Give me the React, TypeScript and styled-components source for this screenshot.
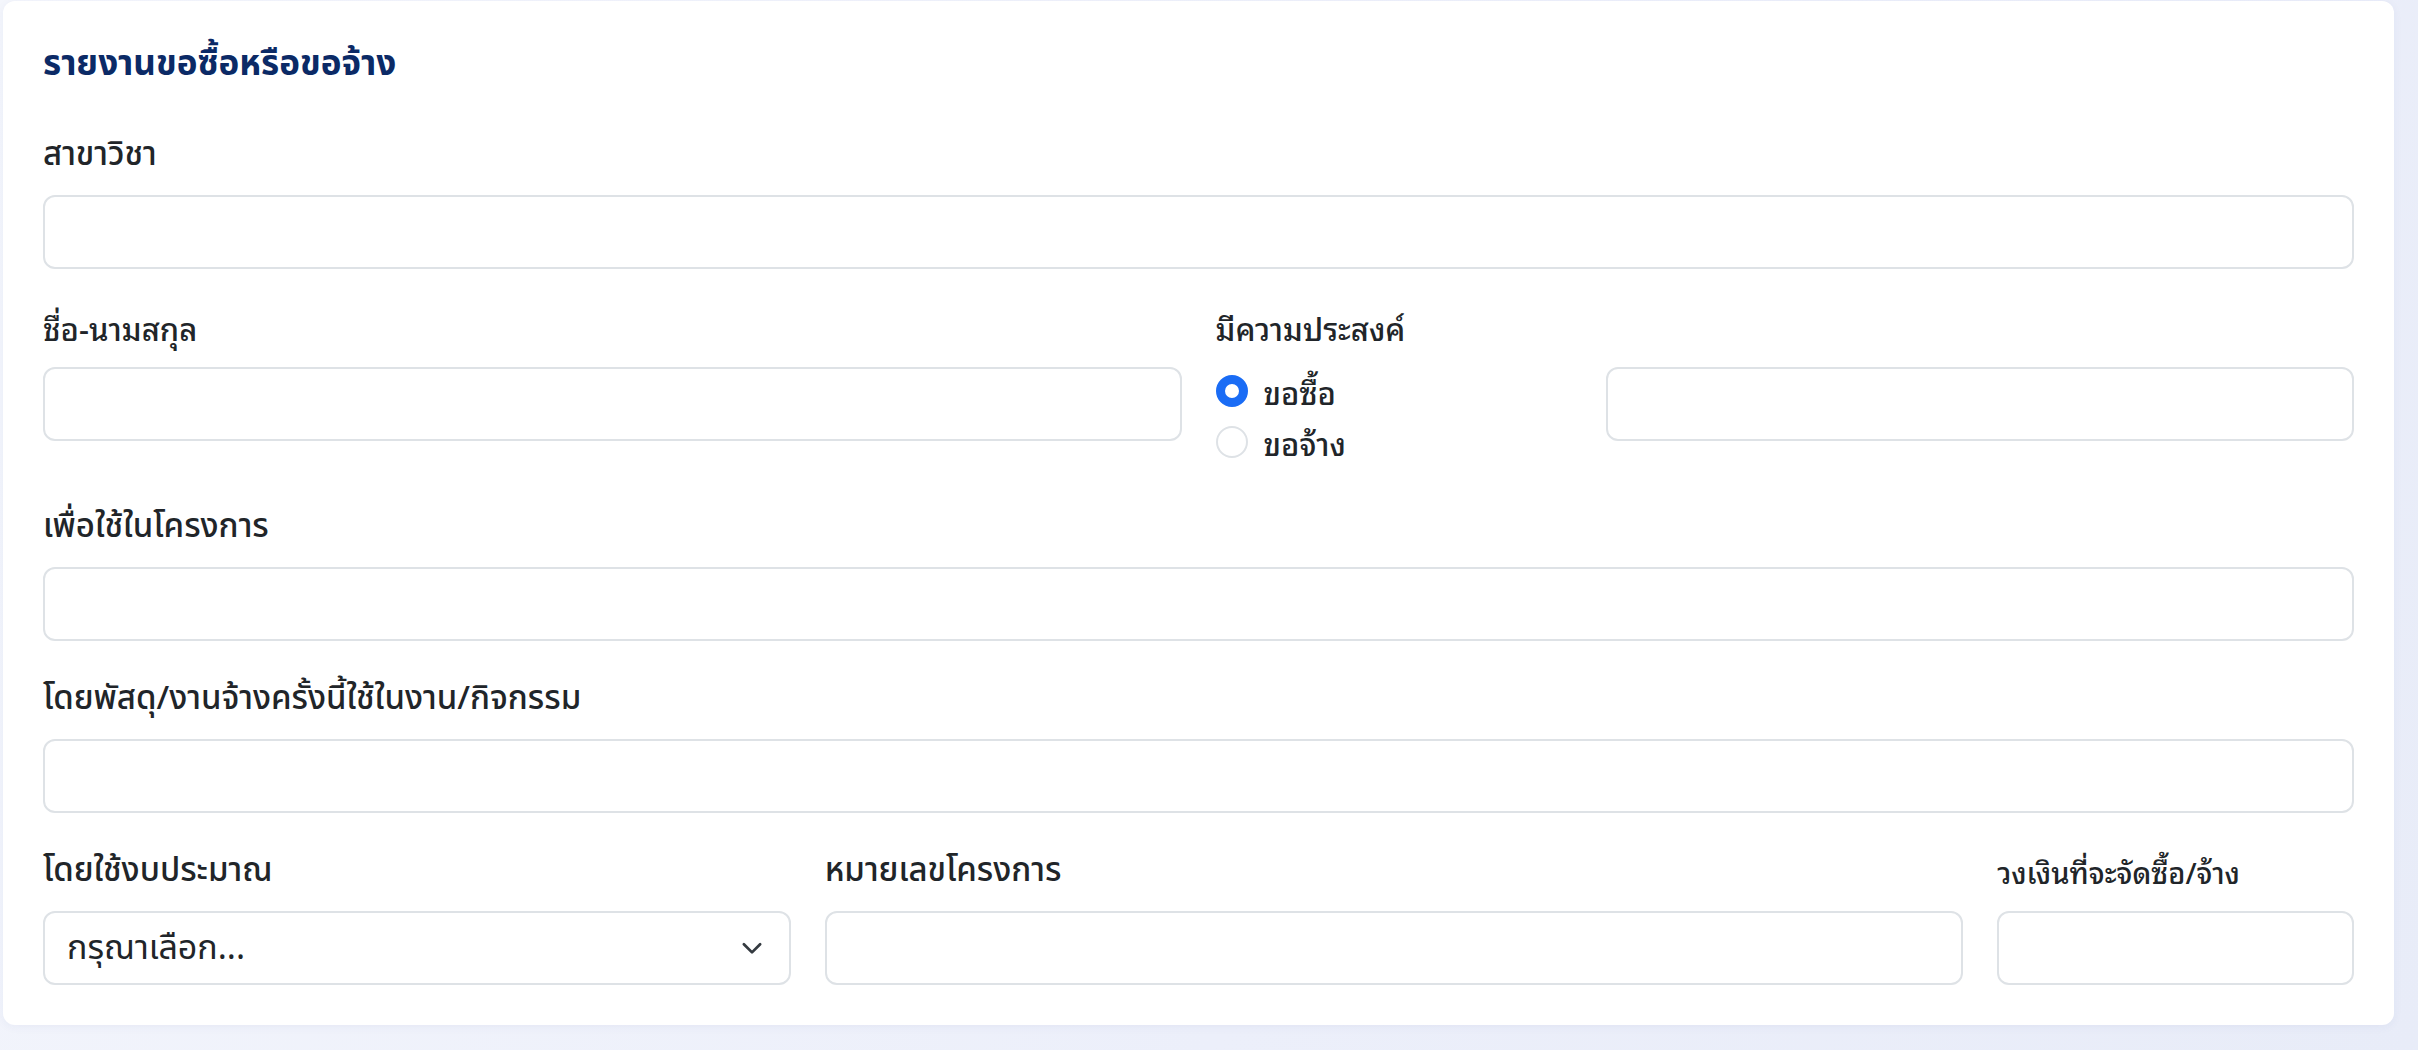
import React from "react";
import styled, { createGlobalStyle } from "styled-components";

const GlobalStyle = createGlobalStyle`
  *, *::before, *::after { box-sizing: border-box; }
  html, body { margin: 0; padding: 0; }
  body {
    background: linear-gradient(120deg, #f4f6fc 0%, #eceffa 60%, #e8ecf8 100%);
    font-family: "Noto Sans Thai", "Noto Sans", sans-serif;
    color: #212529;
    min-height: 1050px;
  }
`;

const Page = styled.div`
  padding: 1px 24px 25px 3px;
`;

const Card = styled.section`
  background: #ffffff;
  border-radius: 12px;
  padding: 40px;
  box-shadow: 0 2px 10px rgba(40, 60, 130, 0.05);
`;

const Title = styled.h2`
  margin: 0 0 42px;
  font-family: "Noto Sans Thai", sans-serif;
  font-size: 35px;
  line-height: 48px;
  font-weight: 700;
  color: #0b2a66;
`;

const Row = styled.div<{ $last?: boolean }>`
  display: grid;
  grid-template-columns: repeat(12, 1fr);
  column-gap: 34px;
  margin-bottom: ${(p) => (p.$last ? "0" : "34px")};
`;

const Field = styled.div<{ $span: number; $noLabel?: boolean }>`
  grid-column: span ${(p) => p.$span};
  display: flex;
  flex-direction: column;
  padding-top: ${(p) => (p.$noLabel ? "64px" : "0")};
  min-width: 0;
`;

const Label = styled.label<{ $looped?: boolean; $size?: number }>`
  display: block;
  margin-bottom: 16px;
  height: 48px;
  line-height: 48px;
  font-family: ${(p) =>
    p.$looped ? '"Noto Sans Thai Looped", sans-serif' : '"Noto Sans Thai", sans-serif'};
  font-size: ${(p) => (p.$size ? `${p.$size}px` : p.$looped ? "31px" : "33px")};
  font-weight: 500;
  color: #212529;
  white-space: nowrap;
`;

const Input = styled.input`
  display: block;
  width: 100%;
  height: 74px;
  padding: 0 24px;
  border: 2px solid #dee2e6;
  border-radius: 12px;
  background: #fff;
  font-family: "Noto Sans Thai", sans-serif;
  font-size: 32px;
  color: #212529;
  outline: none;
`;

const SelectWrap = styled.div`
  position: relative;
  width: 100%;
`;

const Select = styled.select`
  display: block;
  width: 100%;
  height: 74px;
  padding: 0 72px 0 22px;
  border: 2px solid #dee2e6;
  border-radius: 12px;
  background: #fff;
  appearance: none;
  -webkit-appearance: none;
  font-family: "Noto Sans Thai", sans-serif;
  font-size: 34px;
  font-weight: 400;
  color: #212529;
  outline: none;
`;

const Chevron = styled.svg`
  position: absolute;
  right: 24px;
  top: 50%;
  width: 30px;
  height: 30px;
  margin-top: -15px;
  pointer-events: none;
`;

const RadioLine = styled.label`
  display: flex;
  align-items: flex-start;
  min-height: 48px;
  margin-bottom: 3px;
  cursor: pointer;
`;

const RadioInput = styled.input`
  appearance: none;
  -webkit-appearance: none;
  flex: none;
  width: 32px;
  height: 32px;
  margin: 8px 16px 0 0;
  border-radius: 50%;
  border: 2px solid #dee2e6;
  background: #fff;

  &:checked {
    border: 9.5px solid #1a6cf5;
    background: #fff;
  }
`;

const RadioText = styled.span`
  font-family: "Noto Sans Thai Looped", sans-serif;
  font-size: 31px;
  font-weight: 500;
  line-height: 48px;
  color: #212529;
`;

export default function App() {
  return (
    <>
      <GlobalStyle />
      <Page>
        <Card>
          <Title>รายงานขอซื้อหรือขอจ้าง</Title>

          <Row>
            <Field $span={12}>
              <Label>สาขาวิชา</Label>
              <Input type="text" />
            </Field>
          </Row>

          <Row>
            <Field $span={6}>
              <Label $looped>ชื่อ-นามสกุล</Label>
              <Input type="text" />
            </Field>
            <Field $span={2}>
              <Label $looped>มีความประสงค์</Label>
              <RadioLine>
                <RadioInput type="radio" name="purpose" defaultChecked />
                <RadioText>ขอซื้อ</RadioText>
              </RadioLine>
              <RadioLine>
                <RadioInput type="radio" name="purpose" />
                <RadioText>ขอจ้าง</RadioText>
              </RadioLine>
            </Field>
            <Field $span={4} $noLabel>
              <Input type="text" />
            </Field>
          </Row>

          <Row>
            <Field $span={12}>
              <Label>เพื่อใช้ในโครงการ</Label>
              <Input type="text" />
            </Field>
          </Row>

          <Row>
            <Field $span={12}>
              <Label>โดยพัสดุ/งานจ้างครั้งนี้ใช้ในงาน/กิจกรรม</Label>
              <Input type="text" />
            </Field>
          </Row>

          <Row $last>
            <Field $span={4}>
              <Label>โดยใช้งบประมาณ</Label>
              <SelectWrap>
                <Select defaultValue="">
                  <option value="">กรุณาเลือก...</option>
                </Select>
                <Chevron viewBox="0 0 24 24" fill="none" stroke="#343a40" strokeWidth="2.2" strokeLinecap="round" strokeLinejoin="round">
                  <path d="m5.5 9 6.5 6.5 6.5-6.5" />
                </Chevron>
              </SelectWrap>
            </Field>
            <Field $span={6}>
              <Label>หมายเลขโครงการ</Label>
              <Input type="text" />
            </Field>
            <Field $span={2}>
              <Label $looped $size={29}>วงเงินที่จะจัดซื้อ/จ้าง</Label>
              <Input type="text" />
            </Field>
          </Row>
        </Card>
      </Page>
    </>
  );
}
